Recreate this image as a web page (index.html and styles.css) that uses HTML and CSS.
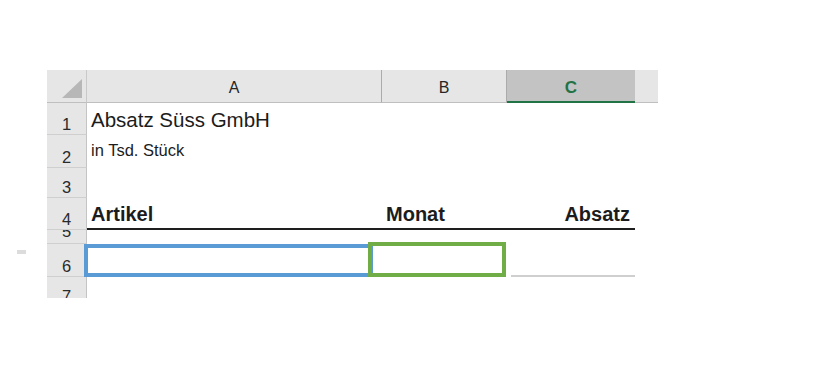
FILE: index.html
```html
<!DOCTYPE html>
<html lang="de">
<head>
<meta charset="utf-8">
<title>Absatz Süss GmbH</title>
<link rel="stylesheet" href="styles.css">
</head>
<body>
<div class="page">
  <div class="gutter"><span class="dash"></span></div>
  <div class="sheet">
    <div class="corner">
      <svg width="20" height="19" viewBox="0 0 20 19" class="tri"><polygon points="20,0 20,19 0,19" fill="#b7b7b7"/></svg>
    </div>
    <div class="colhead">A</div>
    <div class="colhead">B</div>
    <div class="colhead sel">C</div>
    <div class="colhead rest"></div>

    <div class="rowhead">1</div>
    <div class="cell title">Absatz Süss GmbH</div>
    <div class="cell"></div>
    <div class="cell"></div>
    <div class="cell"></div>

    <div class="rowhead">2</div>
    <div class="cell sub">in Tsd. Stück</div>
    <div class="cell"></div>
    <div class="cell"></div>
    <div class="cell"></div>

    <div class="rowhead">3</div>
    <div class="cell"></div>
    <div class="cell"></div>
    <div class="cell"></div>
    <div class="cell"></div>

    <div class="rowhead">4</div>
    <div class="cell th">Artikel</div>
    <div class="cell th">Monat</div>
    <div class="cell th right">Absatz</div>
    <div class="cell"></div>

    <div class="rowhead r5"><span class="num">5</span></div>
    <div class="cell"></div>
    <div class="cell"></div>
    <div class="cell"></div>
    <div class="cell"></div>

    <div class="rowhead">6</div>
    <div class="cell"></div>
    <div class="cell"></div>
    <div class="cell c6"><span class="uline"></span></div>
    <div class="cell"></div>

    <div class="rowhead r7">7</div>
    <div class="cell"></div>
    <div class="cell"></div>
    <div class="cell"></div>
    <div class="cell"></div>

    <div class="frame blue"></div>
    <div class="frame green"></div>
  </div>
</div>
</body>
</html>
```

FILE: styles.css
```css
html, body {
  margin: 0;
  padding: 0;
  background: #ffffff;
}

body {
  font-family: "Liberation Sans", Arial, sans-serif;
  color: #1c1c1c;
}

.page {
  display: flex;
  padding-top: 70px;
}

.gutter {
  width: 47px;
  flex: none;
}

.dash {
  display: block;
  width: 9px;
  height: 4px;
  margin: 180px 0 0 17px;
  background: #dcdcdc;
}

.sheet {
  position: relative;
  display: grid;
  grid-template-columns: 40px 295px 125px 128px 23px;
  grid-template-rows: 33px 32px 33px 30px 32px 14px 33px 21px;
}

.corner {
  background: #e6e6e6;
  border-right: 1px solid #c9c9c9;
  border-bottom: 1px solid #bfbfbf;
  box-sizing: border-box;
  display: flex;
  align-items: flex-end;
  justify-content: flex-end;
  padding: 0 4px 4px 0;
}

.colhead {
  background: #e6e6e6;
  border-bottom: 1px solid #bfbfbf;
  border-right: 1px solid #ababab;
  box-sizing: border-box;
  display: flex;
  align-items: flex-end;
  justify-content: center;
  padding-bottom: 6px;
  font-size: 16px;
  line-height: 1;
  color: #262626;
}

.colhead.sel {
  background: #c3c3c3;
  border-right: none;
  border-bottom: 2px solid #217346;
  color: #217346;
  font-weight: bold;
  font-size: 17px;
  padding-bottom: 5px;
}

.colhead.rest {
  border-right: none;
}

.rowhead {
  background: #e6e6e6;
  border-right: 1px solid #c4c4c4;
  border-bottom: 1px solid #cfcfcf;
  box-sizing: border-box;
  display: flex;
  align-items: flex-end;
  justify-content: center;
  padding-bottom: 2px;
  font-size: 16.5px;
  line-height: 1;
  color: #2a2a2a;
  overflow: hidden;
}

.rowhead.r5 {
  padding-bottom: 0;
  align-items: flex-start;
}

.num {
  display: block;
  margin-top: -7px;
}

.rowhead.r7 {
  align-items: flex-start;
  padding-top: 11px;
  padding-bottom: 0;
  border-bottom: none;
}

.cell {
  box-sizing: border-box;
  display: flex;
  align-items: flex-end;
  white-space: nowrap;
  line-height: 1;
  background: #ffffff;
}

.title {
  font-size: 20.5px;
  padding: 0 0 5px 4px;
}

.sub {
  font-size: 16.5px;
  padding: 0 0 10px 4px;
}

.th {
  font-size: 20px;
  font-weight: bold;
  padding: 0 0 4px 4px;
  border-bottom: 2px solid #1e1e1e;
}

.th.right {
  justify-content: flex-end;
  padding: 0 5px 4px 0;
}

.c6 {
  align-items: flex-end;
  padding-left: 4px;
}

.uline {
  display: block;
  flex: 1;
  height: 0;
  border-bottom: 2px solid #cfcfcf;
}

.frame {
  position: absolute;
  box-sizing: border-box;
}

.blue {
  left: 37px;
  top: 174px;
  width: 289px;
  height: 33px;
  border: 4px solid #5b9bd5;
}

.green {
  left: 321px;
  top: 172px;
  width: 138px;
  height: 35px;
  border: 4px solid #70ad47;
}
```
